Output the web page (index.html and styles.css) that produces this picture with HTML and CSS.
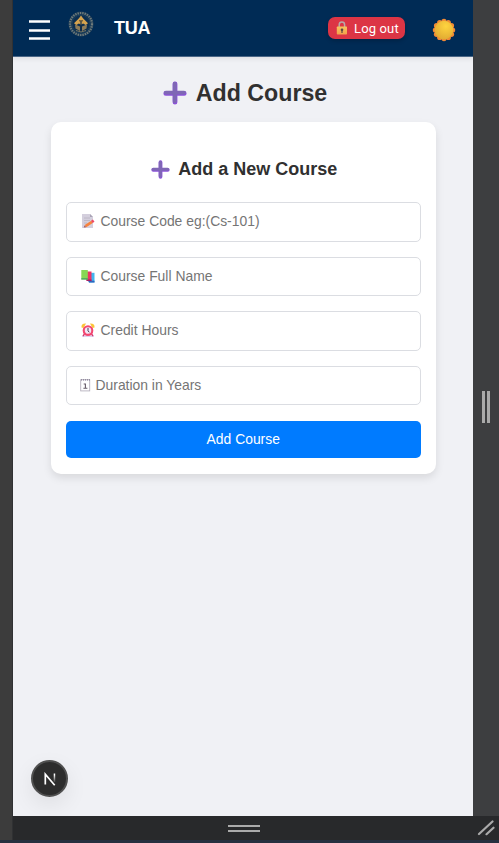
FILE: index.html
```html
<!DOCTYPE html>
<html lang="en">
<head>
<meta charset="utf-8">
<title>TUA – Add Course</title>
<link rel="stylesheet" href="styles.css">
</head>
<body>
<svg class="defs" width="0" height="0" aria-hidden="true">
  <defs>
    <linearGradient id="gold" x1="0" y1="0" x2="0" y2="1"><stop offset="0" stop-color="#f7c65c"/><stop offset="1" stop-color="#f3a04c"/></linearGradient>
    <radialGradient id="sun" cx=".6" cy=".3" r=".75"><stop offset="0" stop-color="#ffd43f"/><stop offset="1" stop-color="#e0a932"/></radialGradient>
    <linearGradient id="fade" gradientUnits="userSpaceOnUse" x1="0" y1="1" x2="0" y2="10"><stop offset=".2" stop-color="#fff"/><stop offset="1" stop-color="#fff" stop-opacity=".1"/></linearGradient>
    <symbol id="plus" viewBox="0 0 24 24"><path d="M12 2.800v18.400M2.800 12.400h18.400" fill="none" stroke="#8d51dc" stroke-width="4.800" stroke-linecap="round"/><path d="M11.800 2.800v17.400M2.800 11.600h18.200" fill="none" stroke="#7f67b5" stroke-width="3.900" stroke-linecap="round"/></symbol>
  </defs>
</svg>
<div class="workspace">
  <div class="rail"></div>
  <div class="device">
    <header class="topbar">
      <svg class="menu" viewBox="0 0 21 21"><path d="M0 1.500h21M0 10.500h21M0 18.500h21" stroke="#fff" stroke-width="2.400"/></svg>
      <svg class="crest" viewBox="0 0 26 26">
        <circle cx="13" cy="13" r="11" fill="none" stroke="#213f58" stroke-width="3"/>
        <circle cx="13" cy="13" r="11" fill="none" stroke="#717d7d" stroke-width="2.200" stroke-dasharray="1.300 1.100"/>
        <circle cx="13" cy="13" r="9" fill="#0c2e50" stroke="#274961" stroke-width=".6"/>
        <path d="M13 4.500l2 2.800 5 5-2.300 1.700-2.600-1.600L13 13.800l-2.100-1.400L8.300 14 6 12.300l5-5z" fill="#d5a34e"/>
        <path d="M7 13.500l5 2V20l-4.500-2.500zM19 13.500l-5 2V20l4.500-2.500z" fill="#8c7b58"/>
        <path d="M13 10v10" stroke="#152d45" stroke-width="1.200"/>
        <path d="M11 9.800h4" stroke="#4d4638" stroke-width="1"/>
        <path d="M8 19.500q5 3 10 0" fill="none" stroke="#777663" stroke-width="1"/>
      </svg>
      <span class="brand">TUA</span>
      <button class="logout">
        <svg class="lock" viewBox="0 0 12 14"><path d="M3.200 7V3.700a2.700 2.700 0 0 1 5.400 0V7" fill="none" stroke="#b7aaa9" stroke-width="1.500"/><rect x=".8" y="5.500" width="10.200" height="8" rx=".7" fill="url(#gold)"/><circle cx="6" cy="8.700" r="1.300" fill="#574745"/><path d="M6 9v3" stroke="#574745" stroke-width="1.200"/></svg>
        <span>Log out</span>
      </button>
      <svg class="sun" viewBox="0 0 24 24"><g fill="#f18a35"><circle cx="12" cy="3.400" r="2.600"/><circle cx="16.300" cy="4.500" r="2.600"/><circle cx="19.500" cy="7.700" r="2.600"/><circle cx="20.600" cy="12" r="2.600"/><circle cx="19.500" cy="16.300" r="2.600"/><circle cx="16.300" cy="19.500" r="2.600"/><circle cx="12" cy="20.600" r="2.600"/><circle cx="7.700" cy="19.500" r="2.600"/><circle cx="4.500" cy="16.300" r="2.600"/><circle cx="3.400" cy="12" r="2.600"/><circle cx="4.500" cy="7.700" r="2.600"/><circle cx="7.700" cy="4.500" r="2.600"/></g><circle cx="12" cy="12" r="9.300" fill="url(#sun)"/></svg>
    </header>
    <main class="page">
      <h1 class="title"><svg class="plus" viewBox="0 0 24 24"><use href="#plus"/></svg><span>Add Course</span></h1>
      <form class="card">
        <h2 class="subtitle"><svg class="plus" viewBox="0 0 24 24"><use href="#plus"/></svg><span>Add a New Course</span></h2>
        <div class="field">
          <svg class="icon" viewBox="0 0 14 14"><path d="M1 0h8l3 3v11H1z" fill="#d4cfdd"/><path d="M9 0v3h3z" fill="#aaa3b5"/><path d="M3 4h6M3 6.500h6M3 9h3" stroke="#b8b2c1" stroke-width=".8"/><path d="M4.500 12.200l6.500-4.400" stroke="#f7833d" stroke-width="2.700"/><path d="M10.800 7.900l1.900-1.300" stroke="#ee4964" stroke-width="2.900"/><path d="M2.700 13.500l1-2.300 1.500 2z" fill="#a75352"/></svg>
          <span>Course Code eg:(Cs-101)</span>
        </div>
        <div class="field">
          <svg class="icon" viewBox="0 0 14 14"><path d="M8 3.800h5.500V13.500H8z" fill="#42b5ef"/><path d="M7 11.800h6.500v1.700H8z" fill="#3265bd"/><path d="M5.500 2.500h5V12h-5z" fill="#ed3265"/><path d="M5 10.500h5.500V12H6z" fill="#9c2368"/><path d="M.3 1h6.500v9.500H.3z" fill="#87d755"/><path d="M.3 9.300h6.500v1.200H.3z" fill="#3f9b62"/></svg>
          <span>Course Full Name</span>
        </div>
        <div class="field">
          <svg class="icon" viewBox="0 0 14 14"><path d="M1 12.500h12V14H1z" fill="#dfd2ef"/><path d="M.5 4.500Q0 .2 5 .5L2.500 5zM13.500 4.500Q14 .2 9 .5L11.500 5z" fill="#fbc439"/><path d="M3.500 11L2 13M10.500 11l1.500 2" stroke="#cf396d" stroke-width="1.300"/><circle cx="7" cy="7.600" r="4.300" fill="#f2e6f5" stroke="#f34771" stroke-width="2.100"/><path d="M7 5v2.800l1.300 1.500" fill="none" stroke="#443a54" stroke-width="1"/></svg>
          <span>Credit Hours</span>
        </div>
        <div class="field">
          <svg class="icon icon-date" viewBox="0 0 11 14"><rect x=".7" y="1.700" width="9" height="11.200" fill="#fff" stroke="#b6b1bd" stroke-width=".9"/><path d="M1 1.800h9" stroke="#817b91" stroke-width="1.200" stroke-dasharray="1 1"/><path d="M3.700 6h1.700v4.200M3.400 10.300h4" fill="none" stroke="#655b68" stroke-width="1.100"/></svg>
          <span>Duration in Years</span>
        </div>
        <button class="submit" type="button">Add Course</button>
      </form>
    </main>
    <div class="dev-badge"><svg viewBox="0 0 14 14"><path d="M2.300 12.500V2.200L11.700 13.200" fill="none" stroke="#fff" stroke-width="1.700"/><path d="M10.700 1.500h1.500V10h-1.500z" fill="url(#fade)"/></svg></div>
  </div>
  <div class="side"><i></i><i></i></div>
  <div class="base">
    <div class="grip"><i></i><i></i></div>
    <svg class="corner" viewBox="0 0 18 16"><path d="M2 14L15.500 1.500M9.500 14.200l7-6.500" fill="none" stroke="#aaa" stroke-width="2.200" stroke-linecap="round"/></svg>
  </div>
</div>
</body>
</html>
```
FILE: styles.css
```css
* { box-sizing: border-box; }
body { margin: 0; background: #263040; font-family: "Liberation Sans", Arial, sans-serif; color: #303030; }
svg { display: block; flex: none; }
.defs { position: absolute; }
.workspace { display: grid; grid-template-columns: 13px 460px 26px; grid-template-rows: 816px 24px; height: 843px; overflow: hidden; }
.rail { grid-row: 1 / 3; background: #3c3c3c; border-right: 1px solid #303133; }
.device { position: relative; background: #f0f1f5; overflow: hidden; }
.topbar { display: flex; align-items: flex-start; height: 57px; padding: 0 17px 0 16px; background: #002b55; border-bottom: 1px solid #4a6686; box-shadow: 0 2px 5px rgba(0, 0, 0, .08); }
.menu { width: 21px; height: 21px; margin-top: 20px; }
.crest { width: 26px; height: 26px; margin: 11px 0 0 18px; }
.brand { margin: 17px 0 0 20px; color: #fff; font-size: 18px; font-weight: 700; line-height: 22px; letter-spacing: -.2px; }
.logout { display: flex; align-items: center; gap: 6px; width: 77px; height: 22px; margin: 17px 0 0 auto; padding: 0 0 0 8px; border: 0; border-radius: 7px; background: #dc3545; color: #fff; font: 400 13px "Roboto", sans-serif; letter-spacing: .15px; box-shadow: 0 2px 4px rgba(0, 0, 0, .2); white-space: nowrap; }
.lock { width: 12px; height: 14px; }
.sun { width: 24px; height: 24px; margin: 18px 0 0 27px; }
.page { padding: 22px 37px 0 38px; }
.title, .subtitle { display: flex; align-items: center; justify-content: center; margin: 0; font-weight: 700; white-space: nowrap; }
.title { gap: 9px; height: 28px; padding-left: 3px; font-size: 23.2px; }
.title .plus { width: 24px; height: 24px; }
.subtitle { gap: 8px; height: 24px; margin-bottom: 21px; padding-left: 2px; font-size: 18px; }
.subtitle .plus { width: 19px; height: 19px; }
.card { height: 352px; margin-top: 15px; padding: 35px 15.500px 0 15px; border-radius: 10px; background: #fff; box-shadow: 0 4px 9px rgba(0, 0, 0, .1); }
.field { display: flex; align-items: center; gap: 6px; height: 39.500px; margin-bottom: 15.100px; padding: 0 0 1px 13.500px; border: 1px solid #dbdde2; border-radius: 5px; color: #757575; font-size: 13.900px; white-space: nowrap; }
.icon { width: 14px; height: 14px; }
.icon-date { width: 11px; margin-left: -1px; margin-right: -1px; }
.submit { display: block; width: 100%; height: 37.500px; margin-top: 15.500px; padding: 0 0 1px; border: 0; border-radius: 5px; background: #007bff; color: #fff; font: 13.900px "Liberation Sans", Arial, sans-serif; }
.dev-badge { position: absolute; left: 18px; bottom: 19px; display: grid; place-items: center; width: 37px; height: 37px; border: 2px solid #505050; border-radius: 50%; background: #2d2d2d; box-shadow: 0 8px 22px rgba(0, 0, 0, .08); }
.dev-badge svg { width: 14px; height: 14px; }
.side { display: flex; align-items: center; justify-content: center; gap: 2px; background: #3d3e40; }
.side i { width: 3px; height: 32px; background: #aaa; transform: translateY(-1px); }
.base { grid-column: 2 / 4; display: flex; align-items: center; background: #28292b; }
.grip { display: grid; gap: 3px; width: 32px; margin-left: 215px; }
.grip i { height: 2px; background: #aaa; }
.corner { width: 18px; height: 16px; margin-left: auto; margin-right: 4px; }
```
